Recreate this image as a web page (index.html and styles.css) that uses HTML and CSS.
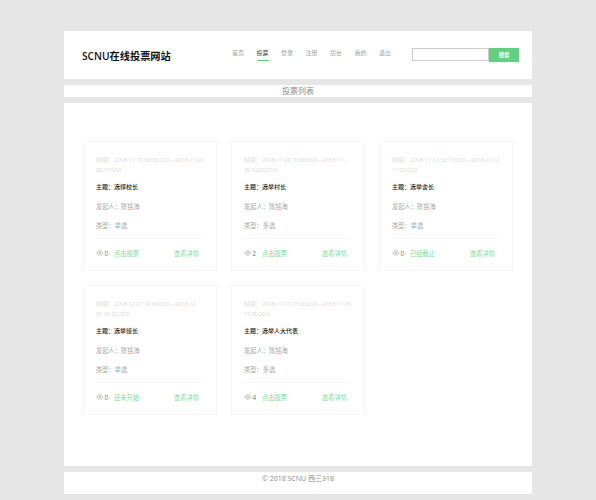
FILE: index.html
```html
<!DOCTYPE html>
<html lang="zh-CN">
<head>
  <meta charset="UTF-8" />
  <title>SCNU在线投票网站</title>
  <link rel="stylesheet" href="styles.css">
</head>
<body>
  <div class="wrap">
    <div class="header">
      <div class="logo">SCNU在线投票网站</div>
      <div class="nav">
        <a href="#">首页</a>
        <a href="#" class="active">投票</a>
        <a href="#">登录</a>
        <a href="#">注册</a>
        <a href="#">后台</a>
        <a href="#">我的</a>
        <a href="#">退出</a>
      </div>
      <div class="search">
        <input type="text" class="search-input">
        <button class="search-btn">搜索</button>
      </div>
    </div>

    <div class="title-bar">投票列表</div>

    <div class="main">
      <div class="card">
        <p class="time">时间： 2018-11-10 00:00:12.0—2018-11-29 00:13:56.0</p>
        <p class="topic">主题：选择校长</p>
        <p class="info">发起人：陈铭海</p>
        <p class="info">类型：单选</p>
        <div class="card-foot">
          <svg class="eye" viewBox="0 0 16 12"><path d="M1 6c2-3 4.500-4.500 7-4.500S13 3 15 6c-2 3-4.500 4.500-7 4.500S3 9 1 6z"/><circle cx="8" cy="6" r="2.200"/></svg>
          <span class="count">0</span>
          <a href="#" class="vote">点击投票</a>
          <a href="#" class="detail">查看详情</a>
        </div>
      </div>
      <div class="card">
        <p class="time">时间： 2018-11-20 10:00:00.0—2018-11-<br>20 12:00:00.0</p>
        <p class="topic">主题：选举村长</p>
        <p class="info">发起人：陈铭海</p>
        <p class="info">类型：多选</p>
        <div class="card-foot">
          <svg class="eye" viewBox="0 0 16 12"><path d="M1 6c2-3 4.500-4.500 7-4.500S13 3 15 6c-2 3-4.500 4.500-7 4.500S3 9 1 6z"/><circle cx="8" cy="6" r="2.200"/></svg>
          <span class="count">2</span>
          <a href="#" class="vote">点击投票</a>
          <a href="#" class="detail">查看详情</a>
        </div>
      </div>
      <div class="card">
        <p class="time">时间： 2018-11-12 10:33:00.0—2018-11-12 11:00:00.0</p>
        <p class="topic">主题：选举舍长</p>
        <p class="info">发起人：陈铭海</p>
        <p class="info">类型：单选</p>
        <div class="card-foot">
          <svg class="eye" viewBox="0 0 16 12"><path d="M1 6c2-3 4.500-4.500 7-4.500S13 3 15 6c-2 3-4.500 4.500-7 4.500S3 9 1 6z"/><circle cx="8" cy="6" r="2.200"/></svg>
          <span class="count">0</span>
          <a href="#" class="vote">已经截止</a>
          <a href="#" class="detail">查看详情</a>
        </div>
      </div>
      <div class="card">
        <p class="time">时间： 2018-12-01 14:30:00.0—2018-12-<br>01 16:30:00.0</p>
        <p class="topic">主题：选举班长</p>
        <p class="info">发起人：陈铭海</p>
        <p class="info">类型：单选</p>
        <div class="card-foot">
          <svg class="eye" viewBox="0 0 16 12"><path d="M1 6c2-3 4.500-4.500 7-4.500S13 3 15 6c-2 3-4.500 4.500-7 4.500S3 9 1 6z"/><circle cx="8" cy="6" r="2.200"/></svg>
          <span class="count">0</span>
          <a href="#" class="vote">还未开始</a>
          <a href="#" class="detail">查看详情</a>
        </div>
      </div>
      <div class="card">
        <p class="time">时间： 2018-11-10 15:30:20.0—2018-11-30 15:30:20.0</p>
        <p class="topic">主题：选举人大代表</p>
        <p class="info">发起人：陈铭海</p>
        <p class="info">类型：多选</p>
        <div class="card-foot">
          <svg class="eye" viewBox="0 0 16 12"><path d="M1 6c2-3 4.500-4.500 7-4.500S13 3 15 6c-2 3-4.500 4.500-7 4.500S3 9 1 6z"/><circle cx="8" cy="6" r="2.200"/></svg>
          <span class="count">4</span>
          <a href="#" class="vote">点击投票</a>
          <a href="#" class="detail">查看详情</a>
        </div>
      </div>
    </div>

    <div class="footer">© 2018 SCNU 西三318</div>
  </div>
</body>
</html>
```

FILE: styles.css
```css
body {
  margin: 0;
  background: #e6e6e6;
  font-family: "Open Sans", "Noto Sans CJK SC", sans-serif;
  overflow: hidden;
}

a {
  text-decoration: none;
}

.wrap {
  width: 468px;
  margin: 0 auto;
  padding-top: 31px;
}

.header {
  display: flex;
  align-items: center;
  height: 48px;
  background: #fff;
  padding: 0 13px 0 18px;
  box-sizing: border-box;
}

.logo {
  width: 150px;
  font-size: 10.2px;
  font-weight: 600;
  color: #111;
}

.nav {
  display: flex;
  gap: 12.5px;
  margin-bottom: 2px;
}

.nav a {
  font-size: 6px;
  line-height: 10px;
  color: #a6a6a6;
  padding-bottom: 2px;
  border-bottom: 1px solid transparent;
}

.nav a.active {
  color: #444;
  border-bottom-color: #5fce7d;
}

.search {
  display: flex;
  margin-left: auto;
}

.search-input {
  width: 77px;
  height: 13px;
  box-sizing: border-box;
  border: 1px solid #ccc;
  padding: 0;
  background: #fff;
}

.search-btn {
  width: 30px;
  height: 14px;
  border: 0;
  padding: 0;
  background: #63cf80;
  color: #fff;
  font-family: inherit;
  font-size: 5.5px;
  font-weight: 600;
}

.title-bar {
  margin-top: 6px;
  height: 12px;
  line-height: 12px;
  background: #fff;
  text-align: center;
  font-size: 8px;
  color: #888;
}

.main {
  display: grid;
  grid-template-columns: repeat(3, 134px);
  grid-auto-rows: min-content;
  gap: 14px;
  align-content: start;
  height: 363px;
  margin-top: 6px;
  padding: 38px 0 0 19px;
  box-sizing: border-box;
  background: #fff;
}

.card {
  height: 130px;
  box-sizing: border-box;
  border: 1px solid #f6f6f6;
  padding: 13px 12px 0;
}

.card p {
  margin: 0;
  font-size: 6.25px;
}

.card .time {
  color: #c2c2c2;
  line-height: 10px;
  font-weight: 300;
  font-size: 6px;
  letter-spacing: -0.3px;
}

.card .topic {
  margin-top: 7px;
  line-height: 10px;
  color: #222;
  font-weight: 500;
  font-size: 6px;
}

.card .info {
  margin-top: 9px;
  line-height: 10px;
  color: #aaa;
}

.card .topic + .info {
  margin-top: 10px;
}

.card-foot {
  display: flex;
  align-items: center;
  height: 28px;
  margin-top: 7px;
  margin-right: 2px;
  border-top: 1px solid #f6f6f6;
  font-size: 6.25px;
}

.eye {
  width: 7.5px;
  height: 6px;
  margin-right: 1px;
  fill: none;
  stroke: #888;
  stroke-width: 1;
}

.count {
  color: #777;
  width: 9.500px;
}

.vote,
.detail {
  color: #7ad995;
}

.detail {
  margin-left: auto;
  margin-right: 3px;
}

.footer {
  margin-top: 6px;
  height: 22px;
  line-height: 14px;
  background: #fff;
  text-align: center;
  font-size: 7px;
  color: #888;
}
```
